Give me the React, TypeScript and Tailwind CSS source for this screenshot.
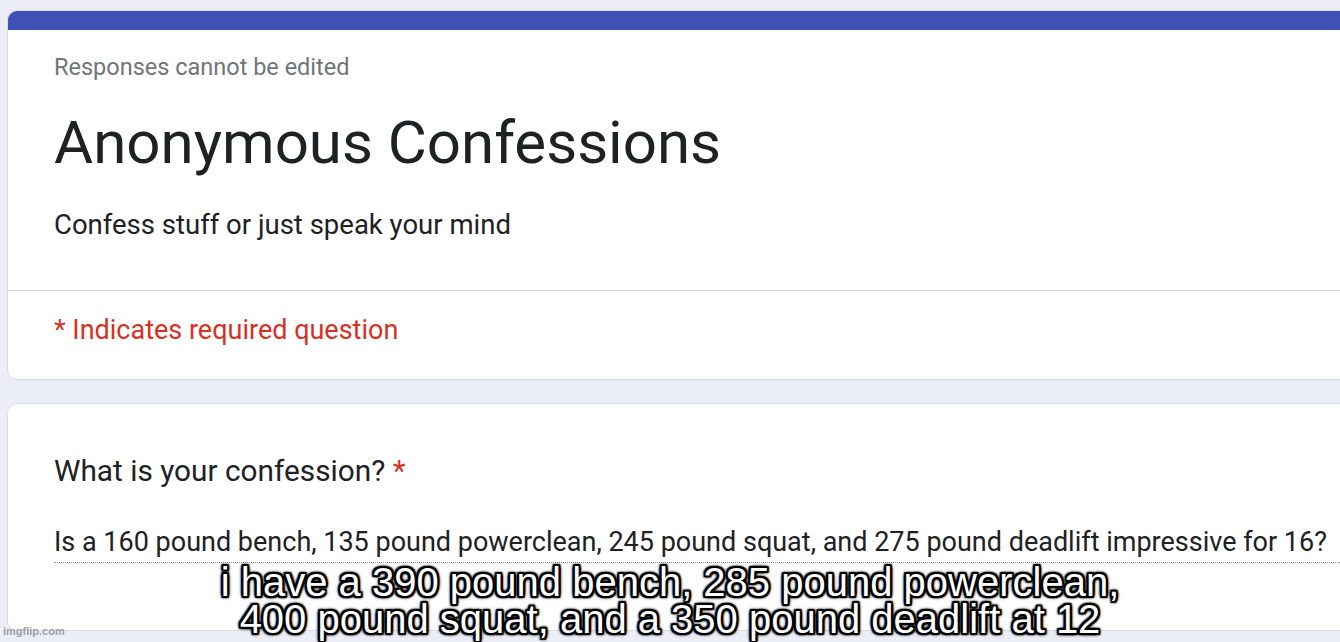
export default function App() {
  return (
    <div className="relative h-[642px] w-[1340px] overflow-hidden bg-[#ebedf7] font-['Roboto',sans-serif]">
      <div className="flex w-[1400px] flex-col gap-[23px] pl-[7px] pt-[10px]">
        <div className="overflow-hidden rounded-[10px] border border-[#dadce0] bg-white">
          <div className="h-[19px] bg-[#3f51b5]" />
          <div className="px-[46px] pt-[22px]">
            <p className="text-[23.5px] leading-[30px] text-[#70757a]">Responses cannot be edited</p>
            <h1 className="mt-[25px] text-[60px] leading-[72px] text-[#202124]">Anonymous Confessions</h1>
            <p className="mt-[28px] text-[27.5px] leading-[36px] text-[#202124]">Confess stuff or just speak your mind</p>
          </div>
          <div className="mt-[47px] border-t border-[#dadce0] px-[46px] pb-[31px] pt-[21px]">
            <p className="text-[27px] leading-[36px] text-[#d93025]">* Indicates required question</p>
          </div>
        </div>
        <div className="h-[228px] rounded-[10px] border border-[#dadce0] bg-white px-[46px] pt-[47px]">
          <p className="text-[29.8px] leading-[40px] text-[#202124]">
            What is your confession? <span className="text-[#d93025]">*</span>
          </p>
          <div className="mt-[33px] w-[1400px] border-b border-dotted border-[#8f8f8f] pb-[2px]">
            <p className="whitespace-nowrap text-[27px] leading-[36px] text-[#202124]">
              Is a 160 pound bench, 135 pound powerclean, 245 pound squat, and 275 pound deadlift impressive for 16?
            </p>
          </div>
        </div>
      </div>
      <div className="absolute left-0 top-[564px] w-full text-center font-['Liberation_Sans',Arial,sans-serif] text-[40px] leading-[37px] text-white [text-shadow:0_0_4px_#000,0_0_4px_#000,0_0_4px_#000,2px_2px_1px_#000,-2px_-2px_1px_#000,2px_-2px_1px_#000,-2px_2px_1px_#000,0_2px_1px_#000,0_-2px_1px_#000,2px_0_1px_#000,-2px_0_1px_#000]">
        i have a 390 pound bench, 285 pound powerclean,
        <br />
        400 pound squat, and a 350 pound deadlift at 12
      </div>
      <div className="absolute bottom-[3px] left-[3px] font-['Liberation_Sans',Arial,sans-serif] text-[11px] font-bold text-[#9aa0a6]">
        imgflip.com
      </div>
    </div>
  );
}
